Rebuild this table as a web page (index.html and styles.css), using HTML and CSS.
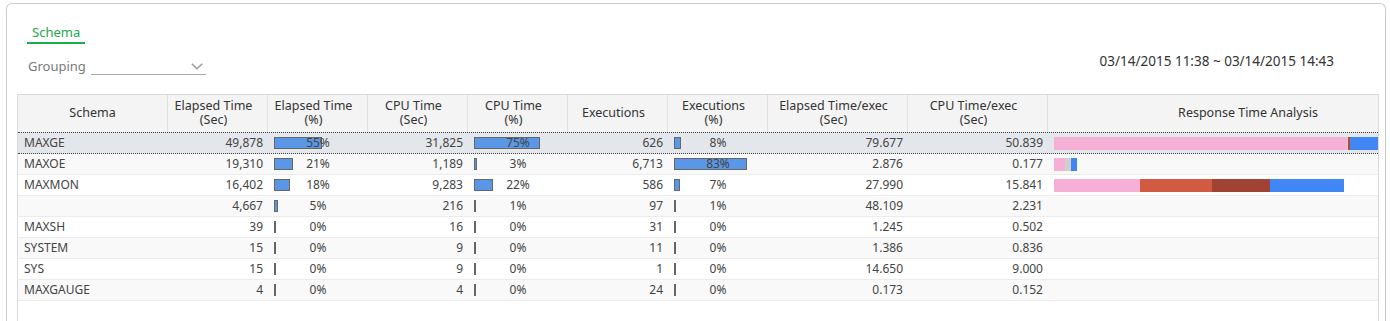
FILE: index.html
```html
<!DOCTYPE html>
<html>
<head>
<meta charset="utf-8">
<link rel="stylesheet" href="styles.css">
</head>
<body>
<div class="card">
  <div class="tabs"><div class="tab">Schema</div></div>
  <div class="toolbar">
    <div class="grouping">
      <span class="grouping-label">Grouping</span>
      <div class="select">
        <svg class="chev" width="12" height="7" viewBox="0 0 12 7"><polyline points="0.8,0.8 6,5.8 11.2,0.8" fill="none" stroke="#9a9a9a" stroke-width="1.4"/></svg>
      </div>
    </div>
    <div class="period">03/14/2015 11:38 ~ 03/14/2015 14:43</div>
  </div>
  <div class="grid">
    <div class="row head">
      <div class="h first">Schema</div>
      <div class="h">Elapsed Time<br>(Sec)</div>
      <div class="h">Elapsed Time<br>(%)</div>
      <div class="h">CPU Time<br>(Sec)</div>
      <div class="h">CPU Time<br>(%)</div>
      <div class="h">Executions</div>
      <div class="h">Executions<br>(%)</div>
      <div class="h">Elapsed Time/exec<br>(Sec)</div>
      <div class="h">CPU Time/exec<br>(Sec)</div>
      <div class="h last">Response Time Analysis</div>
    </div>

    <div class="row r sel">
      <div class="c">MAXGE</div>
      <div class="c num">49,878</div>
      <div class="c pct"><span class="bar" style="width:48px"></span><span class="pt">55%</span></div>
      <div class="c num">31,825</div>
      <div class="c pct"><span class="bar" style="width:66px"></span><span class="pt">75%</span></div>
      <div class="c num">626</div>
      <div class="c pct"><span class="bar" style="width:7px"></span><span class="pt">8%</span></div>
      <div class="c num">79.677</div>
      <div class="c num">50.839</div>
      <div class="c rta"><span class="seg pink" style="width:293px"></span><span class="seg gray" style="width:1px"></span><span class="seg brown" style="width:2px"></span><span class="seg blue" style="width:40px"></span></div>
    </div>

    <div class="row r alt">
      <div class="c">MAXOE</div>
      <div class="c num">19,310</div>
      <div class="c pct"><span class="bar" style="width:19px"></span><span class="pt">21%</span></div>
      <div class="c num">1,189</div>
      <div class="c pct"><span class="bar" style="width:3px"></span><span class="pt">3%</span></div>
      <div class="c num">6,713</div>
      <div class="c pct"><span class="bar" style="width:73px"></span><span class="pt">83%</span></div>
      <div class="c num">2.876</div>
      <div class="c num">0.177</div>
      <div class="c rta"><span class="seg pink" style="width:11px"></span><span class="seg gray" style="width:6px"></span><span class="seg blue" style="width:6px"></span></div>
    </div>

    <div class="row r">
      <div class="c">MAXMON</div>
      <div class="c num">16,402</div>
      <div class="c pct"><span class="bar" style="width:16px"></span><span class="pt">18%</span></div>
      <div class="c num">9,283</div>
      <div class="c pct"><span class="bar" style="width:19px"></span><span class="pt">22%</span></div>
      <div class="c num">586</div>
      <div class="c pct"><span class="bar" style="width:6px"></span><span class="pt">7%</span></div>
      <div class="c num">27.990</div>
      <div class="c num">15.841</div>
      <div class="c rta"><span class="seg pink" style="width:86px"></span><span class="seg coral" style="width:72px"></span><span class="seg dark" style="width:58px"></span><span class="seg blue" style="width:74px"></span></div>
    </div>

    <div class="row r alt">
      <div class="c"></div>
      <div class="c num">4,667</div>
      <div class="c pct"><span class="bar" style="width:4px"></span><span class="pt">5%</span></div>
      <div class="c num">216</div>
      <div class="c pct"><span class="bar" style="width:2px"></span><span class="pt">1%</span></div>
      <div class="c num">97</div>
      <div class="c pct"><span class="bar" style="width:2px"></span><span class="pt">1%</span></div>
      <div class="c num">48.109</div>
      <div class="c num">2.231</div>
      <div class="c rta"></div>
    </div>

    <div class="row r">
      <div class="c">MAXSH</div>
      <div class="c num">39</div>
      <div class="c pct"><span class="bar" style="width:2px"></span><span class="pt">0%</span></div>
      <div class="c num">16</div>
      <div class="c pct"><span class="bar" style="width:2px"></span><span class="pt">0%</span></div>
      <div class="c num">31</div>
      <div class="c pct"><span class="bar" style="width:2px"></span><span class="pt">0%</span></div>
      <div class="c num">1.245</div>
      <div class="c num">0.502</div>
      <div class="c rta"></div>
    </div>

    <div class="row r alt">
      <div class="c">SYSTEM</div>
      <div class="c num">15</div>
      <div class="c pct"><span class="bar" style="width:2px"></span><span class="pt">0%</span></div>
      <div class="c num">9</div>
      <div class="c pct"><span class="bar" style="width:2px"></span><span class="pt">0%</span></div>
      <div class="c num">11</div>
      <div class="c pct"><span class="bar" style="width:2px"></span><span class="pt">0%</span></div>
      <div class="c num">1.386</div>
      <div class="c num">0.836</div>
      <div class="c rta"></div>
    </div>

    <div class="row r">
      <div class="c">SYS</div>
      <div class="c num">15</div>
      <div class="c pct"><span class="bar" style="width:2px"></span><span class="pt">0%</span></div>
      <div class="c num">9</div>
      <div class="c pct"><span class="bar" style="width:2px"></span><span class="pt">0%</span></div>
      <div class="c num">1</div>
      <div class="c pct"><span class="bar" style="width:2px"></span><span class="pt">0%</span></div>
      <div class="c num">14.650</div>
      <div class="c num">9.000</div>
      <div class="c rta"></div>
    </div>

    <div class="row r alt">
      <div class="c">MAXGAUGE</div>
      <div class="c num">4</div>
      <div class="c pct"><span class="bar" style="width:2px"></span><span class="pt">0%</span></div>
      <div class="c num">4</div>
      <div class="c pct"><span class="bar" style="width:2px"></span><span class="pt">0%</span></div>
      <div class="c num">24</div>
      <div class="c pct"><span class="bar" style="width:2px"></span><span class="pt">0%</span></div>
      <div class="c num">0.173</div>
      <div class="c num">0.152</div>
      <div class="c rta"></div>
    </div>
  </div>
</div>
</body>
</html>
```

FILE: styles.css
```css
html, body {
  margin: 0;
  height: 321px;
  overflow: hidden;
  background: #fff;
}
body {
  font-family: "Noto Sans", "Open Sans", sans-serif;
  color: #333;
}
.card {
  margin: 3px 4px 0 6px;
  border: 1px solid #cbcbcb;
  border-bottom: none;
  border-radius: 6px 6px 0 0;
  padding: 19px 6px 0 10px;
  height: 340px;
  box-sizing: border-box;
}
.tabs {
  display: flex;
}
.tab {
  margin-left: 10px;
  padding: 0 5px 1px;
  font-size: 13px;
  line-height: 18px;
  color: #1caa4c;
  border-bottom: 2px solid #15b04c;
}
.toolbar {
  display: flex;
  justify-content: space-between;
  align-items: flex-start;
  margin-top: 13px;
}
.grouping {
  display: flex;
  align-items: flex-start;
  margin-left: 11px;
}
.grouping-label {
  font-size: 13px;
  line-height: 18px;
  color: #7a7a7a;
  margin-right: 5px;
}
.select {
  width: 115px;
  height: 17px;
  border-bottom: 1px solid #a8a8a8;
  display: flex;
  justify-content: flex-end;
  align-items: flex-end;
  box-sizing: content-box;
}
.chev {
  display: block;
  margin: 0 3px 4px 0;
}
.period {
  font-size: 13.5px;
  line-height: 18px;
  color: #333;
  margin: -5px 45px 0 0;
}
.grid {
  margin-top: 19px;
  border: 1px solid #dadada;
  border-bottom: none;
  height: 300px;
  overflow: hidden;
}
.row {
  display: grid;
  grid-template-columns: 150px repeat(6, 100px) 140px 140px 408px;
}
.head {
  background: #f4f4f4;
  height: 37px;
}
.h {
  display: flex;
  align-items: center;
  justify-content: center;
  text-align: center;
  font-size: 12.5px;
  line-height: 14px;
  color: #333;
  padding: 0 8px 2px 0;
  box-sizing: border-box;
  border-right: 1px solid #e0e0e0;
}
.h.first {
  padding-right: 0;
}
.h.last {
  border-right: none;
}
.r {
  height: 20px;
  border-bottom: 1px solid #ececec;
  font-size: 12px;
  line-height: 20px;
  color: #444;
}
.r.alt {
  background: #f9f9f9;
}
.r.sel {
  background: #e3e6ea;
  border-top: 1px dotted #444;
  border-bottom: 1px dotted #444;
}
.c {
  padding: 0 5px 0 6px;
  white-space: nowrap;
  overflow: hidden;
}
.num {
  text-align: right;
}
.pct {
  display: grid;
  padding: 0;
}
.pct > * {
  grid-area: 1 / 1;
}
.bar {
  justify-self: start;
  align-self: center;
  margin-left: 6px;
  height: 12px;
  box-sizing: border-box;
  border: 1px solid #666;
  background: #5a97e6;
}
.pt {
  justify-self: center;
}
.rta {
  display: flex;
  align-items: center;
  padding: 0 0 0 6px;
}
.seg {
  flex: none;
  height: 13px;
}
.pink { background: #f6b0d6; }
.gray { background: #cfcfcf; }
.brown { background: #c0462e; }
.coral { background: #d05a42; }
.dark { background: #a04333; }
.blue { background: #4087f5; }
```
